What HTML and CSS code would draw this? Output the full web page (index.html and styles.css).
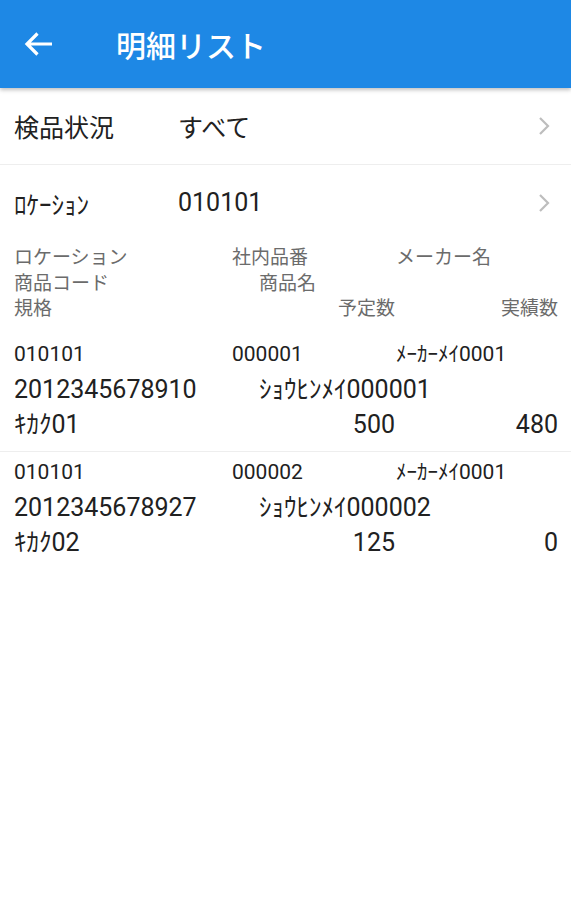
FILE: index.html
```html
<!DOCTYPE html>
<html lang="ja">
<head>
  <meta charset="UTF-8" />
  <title>明細リスト</title>
  <meta name="viewport" content="width=device-width, initial-scale=1.0" />
  <link rel="stylesheet" href="styles.css">
</head>
<body>

  <header class="app-bar">
    <button class="back" aria-label="戻る">
      <svg width="30" height="26" viewBox="0 0 30 26">
        <path d="M28 13H3.5M13.5 2.5L3 13l10.5 10.5" fill="none" stroke="#fff" stroke-width="3.2"/>
      </svg>
    </button>
    <h1 class="title">明細リスト</h1>
  </header>

  <div class="filter filter-status">
    <span class="filter-label">検品状況</span>
    <span class="filter-value">すべて</span>
    <svg class="chevron" width="14" height="20" viewBox="0 0 14 20">
      <path d="M3 2l8 8-8 8" fill="none" stroke="#bdbdbd" stroke-width="2.2"/>
    </svg>
  </div>

  <div class="filter filter-location">
    <span class="filter-label">ﾛｹｰｼｮﾝ</span>
    <span class="filter-value">010101</span>
    <svg class="chevron" width="14" height="20" viewBox="0 0 14 20">
      <path d="M3 2l8 8-8 8" fill="none" stroke="#bdbdbd" stroke-width="2.2"/>
    </svg>
  </div>

  <!-- column captions -->
  <div class="legend">
    <div class="line line-1">
      <span>ロケーション</span><span>社内品番</span><span>メーカー名</span>
    </div>
    <div class="line line-2">
      <span>商品コード</span><span>商品名</span>
    </div>
    <div class="line line-3">
      <span>規格</span><span class="num">予定数</span><span class="num">実績数</span>
    </div>
  </div>

  <ul class="items">
    <li class="item">
      <div class="line line-1">
        <span>010101</span><span>000001</span><span>ﾒｰｶｰﾒｲ0001</span>
      </div>
      <div class="line line-2">
        <span>2012345678910</span><span>ｼｮｳﾋﾝﾒｲ000001</span>
      </div>
      <div class="line line-3">
        <span>ｷｶｸ01</span><span class="num">500</span><span class="num">480</span>
      </div>
    </li>
    <li class="item">
      <div class="line line-1">
        <span>010101</span><span>000002</span><span>ﾒｰｶｰﾒｲ0001</span>
      </div>
      <div class="line line-2">
        <span>2012345678927</span><span>ｼｮｳﾋﾝﾒｲ000002</span>
      </div>
      <div class="line line-3">
        <span>ｷｶｸ02</span><span class="num">125</span><span class="num">0</span>
      </div>
    </li>
  </ul>

</body>
</html>
```

FILE: styles.css
```css
body {
  margin: 0;
  background-color: #fff;
  color: #212121;
  font-family: Roboto, "Noto Sans CJK JP", sans-serif;
}

.app-bar {
  height: 88px;
  background-color: #1e88e5;
  display: flex;
  align-items: center;
  box-shadow: 0 2px 4px rgba(0, 0, 0, 0.25);
  position: relative;
}

.back {
  width: 48px;
  height: 48px;
  margin-left: 15px;
  padding: 0;
  border: none;
  background: none;
  display: flex;
  align-items: center;
  justify-content: center;
}

.title {
  margin: 0 0 0 53px;
  color: #fff;
  font-size: 30px;
  font-weight: 500;
}

.filter {
  display: flex;
  align-items: center;
  padding: 0 20px 0 14px;
}

.filter-status {
  height: 76px;
  border-bottom: 1px solid #eeeeee;
  font-size: 25px;
}

.filter-location {
  height: 75px;
  font-size: 25px;
}

.filter-label {
  width: 164px;
}

.filter-value {
  flex: 1;
}

.legend {
  padding: 5px 13px 12px 14px;
  color: #6b6b6b;
  font-size: 19px;
}

.legend .line {
  line-height: 25.5px;
}

.line {
  display: grid;
  white-space: nowrap;
}

.line-1 {
  grid-template-columns: 218px 164px 1fr;
}

.line-2 {
  grid-template-columns: 245px 1fr;
}

.line-3 {
  grid-template-columns: 1fr 100px 163px;
}

.num {
  text-align: right;
}

.items {
  list-style: none;
  margin: 0;
  padding: 0;
}

.item {
  padding: 3px 13px 9px 14px;
}

.item + .item {
  border-top: 1px solid #eeeeee;
}

.item .line {
  line-height: 35px;
  font-size: 25px;
}

.item .line-1 {
  font-size: 21px;
}
```
